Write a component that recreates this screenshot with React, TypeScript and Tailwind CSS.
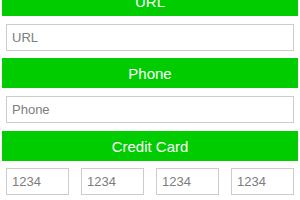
import React from "react";

function Bar({ label }: { label: string }) {
  return (
    <div className="h-[30px] mx-[2px] bg-[#00cc00] text-white text-[15px] leading-[31px] text-center">
      {label}
    </div>
  );
}

function Field({ ph, className }: { ph: string; className?: string }) {
  return (
    <input
      placeholder={ph}
      className={
        "h-[27px] border border-[#cccccc] bg-white px-[5px] text-[13px] text-[#333] placeholder:text-[#7d7d7d] outline-none " +
        (className ?? "")
      }
      style={{ fontFamily: '"Liberation Sans", Arial, sans-serif' }}
    />
  );
}

export default function App() {
  return (
    <div
      className="w-[300px] h-[200px] overflow-hidden bg-white"
      style={{ fontFamily: '"Liberation Sans", Arial, sans-serif' }}
    >
      <div className="mt-[-14px] flex flex-col">
        <Bar label="URL" />
        <div className="px-[6px] mt-[8px] flex">
          <Field ph="URL" className="w-full" />
        </div>
        <div className="mt-[7px]">
          <Bar label="Phone" />
        </div>
        <div className="px-[6px] mt-[8px] flex">
          <Field ph="Phone" className="w-full" />
        </div>
        <div className="mt-[8px]">
          <Bar label="Credit Card" />
        </div>
        <div className="px-[6px] mt-[7px] flex gap-[12px]">
          <Field ph="1234" className="w-[63px]" />
          <Field ph="1234" className="w-[63px]" />
          <Field ph="1234" className="w-[63px]" />
          <Field ph="1234" className="w-[63px]" />
        </div>
      </div>
    </div>
  );
}
